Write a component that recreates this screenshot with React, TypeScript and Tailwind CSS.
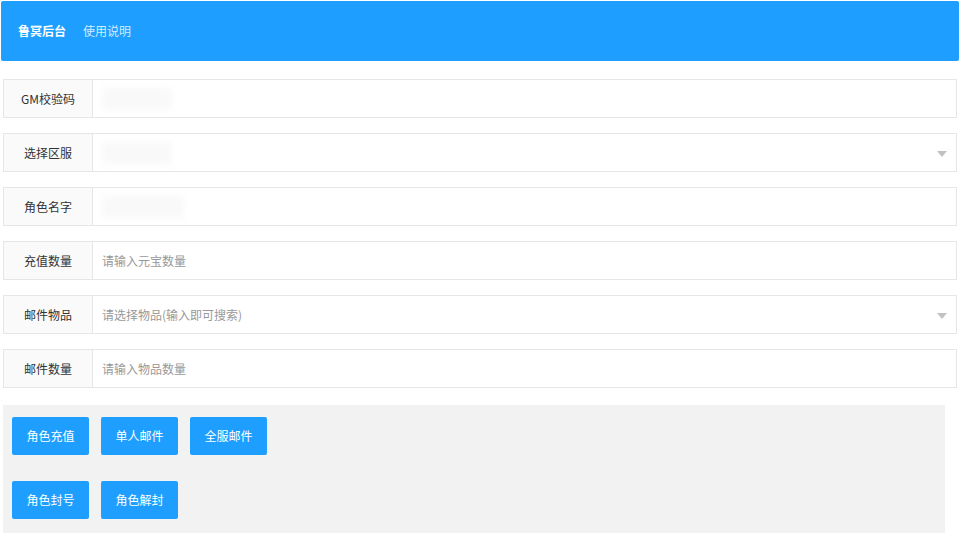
import React from 'react'

type Field = {
  label: string
  placeholder?: string
  select?: boolean
  masked?: number
}

const fields: Field[] = [
  { label: 'GM校验码', masked: 70 },
  { label: '选择区服', select: true, masked: 70 },
  { label: '角色名字', masked: 82 },
  { label: '充值数量', placeholder: '请输入元宝数量' },
  { label: '邮件物品', placeholder: '请选择物品(输入即可搜索)', select: true },
  { label: '邮件数量', placeholder: '请输入物品数量' },
]

const FormRow = ({ label, placeholder, select, masked }: Field) => (
  <div className="flex h-[39px]">
    <div className="w-[90px] shrink-0 flex items-center justify-center border border-[#e6e6e6] bg-[#fafafa] text-[12px] text-[#333]">
      {label}
    </div>
    <div className="relative flex-1 flex items-center border border-l-0 border-[#e6e6e6] bg-white pl-[9px] text-[12px] text-[#999]">
      {placeholder}
      {masked && (
        <div
          className="h-[22px] bg-[#f9f9f9] blur-[3px]"
          style={{ width: masked }}
        />
      )}
      {select && (
        <span className="absolute right-[9px] top-1/2 -translate-y-[2px] border-x-[5px] border-t-[6px] border-x-transparent border-t-[#c2c2c2]" />
      )}
    </div>
  </div>
)

const Btn = ({ children }: { children: React.ReactNode }) => (
  <button
    type="button"
    className="h-[38px] w-[77px] rounded-[2px] bg-[#1e9fff] text-[12px] text-white"
  >
    {children}
  </button>
)

export default function App() {
  return (
    <div
      className="w-[960px] h-[540px] bg-white overflow-hidden"
      style={{ fontFamily: '"Noto Sans CJK SC", "Liberation Sans", sans-serif' }}
    >
      <header className="mx-[1px] mt-[1px] h-[60px] flex items-center gap-[17px] rounded-[2px] bg-[#1e9fff] px-[17px] text-[12px]">
        <span className="font-bold text-white">鲁冥后台</span>
        <span className="text-[#d2ecff]">使用说明</span>
      </header>

      <div className="flex flex-col gap-[15px] pl-[3px] pr-[3px] pt-[18px]">
        {fields.map((f) => (
          <FormRow key={f.label} {...f} />
        ))}
      </div>

      <div className="mt-[17px] ml-[3px] mr-[15px] flex flex-col gap-[26px] bg-[#f2f2f2] px-[9px] pt-[12px] pb-[14px]">
        <div className="flex gap-[12px]">
          <Btn>角色充值</Btn>
          <Btn>单人邮件</Btn>
          <Btn>全服邮件</Btn>
        </div>
        <div className="flex gap-[12px]">
          <Btn>角色封号</Btn>
          <Btn>角色解封</Btn>
        </div>
      </div>
    </div>
  )
}
